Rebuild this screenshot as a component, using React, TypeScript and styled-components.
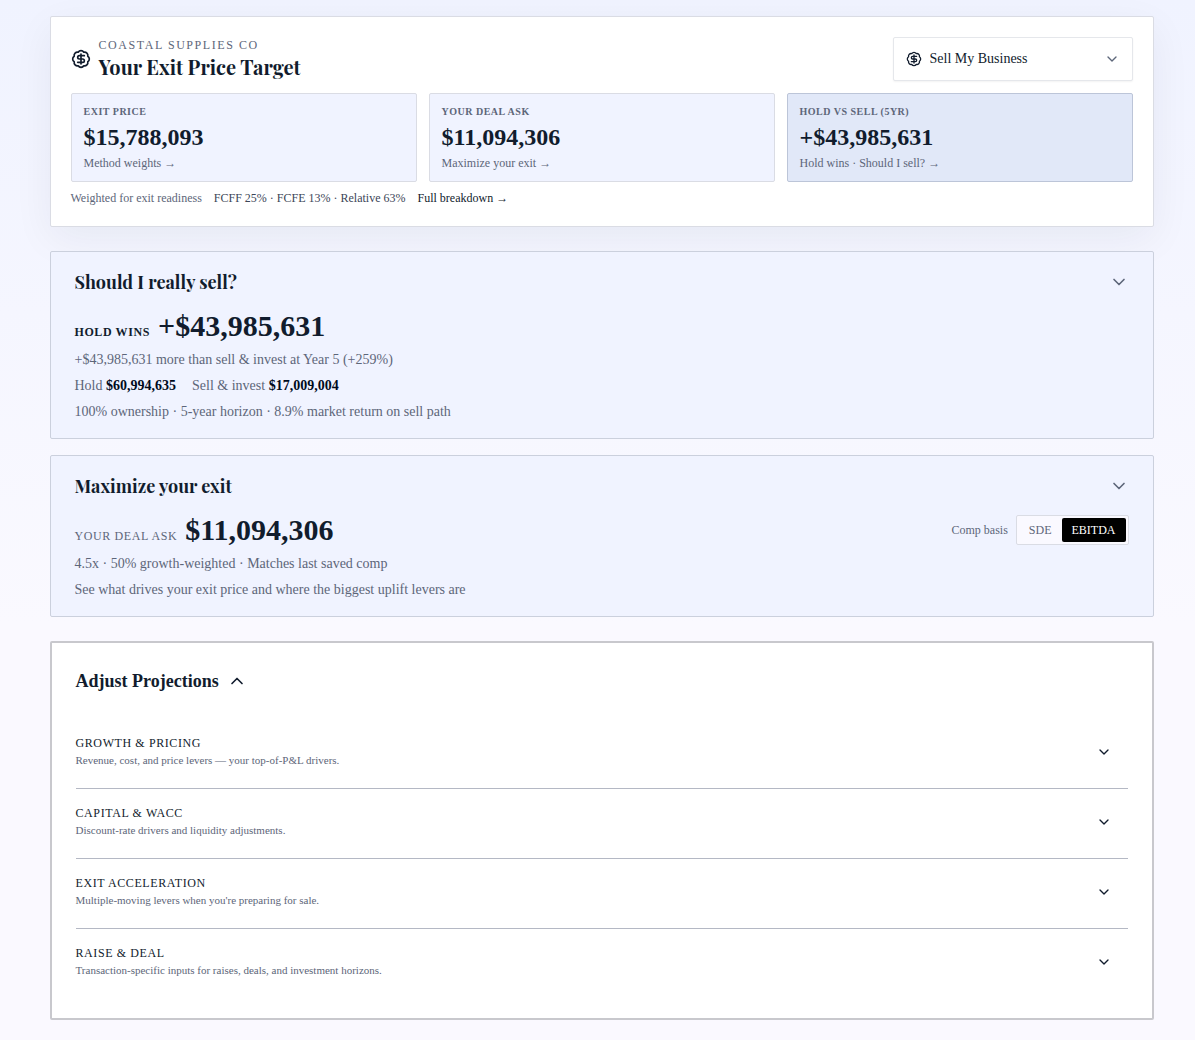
import React, { useState } from "react";
import styled, { createGlobalStyle } from "styled-components";
import { BadgeDollarSign, ChevronDown, ChevronUp } from "lucide-react";

const ink = "#111c2d";
const muted = "#5d6679";
const mist = "#f0f3ff";
const line = "#dadce4";
const body = `"Liberation Serif", "Times New Roman", serif`;
const display = `"Playfair Display", "Liberation Serif", serif`;

const GlobalStyle = createGlobalStyle`
  *, *::before, *::after { box-sizing: border-box; }
  body {
    margin: 0;
    min-height: 100vh;
    font: 400 14px/20px ${body};
    color: ${ink};
    background: linear-gradient(180deg, ${mist} 0%, #faf9ff 60%, #faf9ff 100%);
  }
  h1, h2, p, ul { margin: 0; padding: 0; }
  ul { list-style: none; }
  button, select { font: inherit; color: inherit; cursor: pointer; }
  svg { display: block; flex: none; }
`;

const Page = styled.main`
  padding: 16px 16px 20px 24px;
`;

const Column = styled.div`
  display: flex;
  flex-direction: column;
  gap: 24px;
  max-width: 1104px;
  margin: 0 auto;
`;

const Summary = styled.section`
  display: flex;
  flex-direction: column;
  padding: 20px;
  background: #fff;
  border: 1px solid ${line};
  border-radius: 2px;
  box-shadow: 0 12px 40px rgba(17, 28, 45, 0.06);
`;

const SummaryHeader = styled.header`
  display: flex;
  align-items: center;
  justify-content: space-between;
  gap: 16px;
`;

const Brand = styled.div`
  display: flex;
  align-items: center;
  gap: 8px;
`;

const Company = styled.p`
  font-size: 12px;
  line-height: 16px;
  letter-spacing: 0.13em;
  text-transform: uppercase;
  color: ${muted};
`;

const Title = styled.h1`
  font: 700 20px/28px ${display};
`;

const Picker = styled.div`
  position: relative;
  width: 240px;
`;

const PickerIcon = styled.span<{ $side: "left" | "right" }>`
  position: absolute;
  top: 14px;
  ${(p) => p.$side}: 13px;
  color: ${(p) => (p.$side === "right" ? muted : ink)};
  pointer-events: none;
`;

const PickerSelect = styled.select`
  display: block;
  width: 100%;
  height: 44px;
  padding: 0 36px;
  appearance: none;
  background: #fff;
  border: 1px solid #e5e7eb;
  border-radius: 2px;
  box-shadow: 0 1px 2px rgba(0, 0, 0, 0.05);
`;

const Metrics = styled.div`
  display: grid;
  grid-template-columns: repeat(3, minmax(0, 1fr));
  gap: 12px;
  margin-top: 12px;
`;

const Metric = styled.button<{ $strong?: boolean }>`
  display: flex;
  flex-direction: column;
  gap: 3px;
  padding: 10px 12px;
  text-align: left;
  background: ${(p) => (p.$strong ? "#e1e8f8" : mist)};
  border: 1px solid ${(p) => (p.$strong ? "#bcc5d8" : line)};
  border-radius: 2px;
`;

const MetricLabel = styled.span`
  font-size: 10px;
  font-weight: 700;
  line-height: 15px;
  letter-spacing: 0.05em;
  text-transform: uppercase;
  color: ${muted};
`;

const MetricValue = styled.span`
  font-size: 24px;
  font-weight: 700;
  line-height: 30px;
`;

const MetricNote = styled.span`
  font-size: 12px;
  line-height: 16px;
  color: ${muted};
`;

const Weights = styled.div`
  display: flex;
  flex-wrap: wrap;
  gap: 12px;
  margin-top: 8px;
  font-size: 12px;
  line-height: 16px;
  color: ${muted};
`;

const WeightSplit = styled.span`
  color: #3c4657;
`;

const BreakdownLink = styled.a`
  color: ${ink};
  text-decoration: none;
`;

const Panels = styled.div`
  display: flex;
  flex-direction: column;
  gap: 16px;
`;

const Panel = styled.section`
  padding: 16px 24px 15px;
  background: ${mist};
  border: 1px solid #cbd0dd;
  border-radius: 2px;
`;

const PanelHeading = styled.h2`
  margin-bottom: 11px;
`;

const PanelToggle = styled.button`
  display: flex;
  align-items: center;
  justify-content: space-between;
  width: 100%;
  padding: 0;
  border: 0;
  background: none;
  text-align: left;
  font: 700 18px/28px ${display};

  svg { color: ${muted}; }
`;

const PanelBody = styled.div`
  display: flex;
  flex-direction: column;
  gap: 4px;
  line-height: 22px;
  color: ${muted};
`;

const HeroRow = styled.div`
  display: flex;
  flex-wrap: wrap;
  align-items: center;
  justify-content: space-between;
  gap: 8px;
`;

const Hero = styled.p`
  display: flex;
  align-items: baseline;
  gap: 8px;
`;

const HeroLabel = styled.span<{ $bold?: boolean }>`
  font-size: 12px;
  font-weight: ${(p) => (p.$bold ? 700 : 400)};
  letter-spacing: 0.05em;
  text-transform: uppercase;
  color: ${(p) => (p.$bold ? ink : muted)};
`;

const HeroValue = styled.strong`
  font-size: 30px;
  line-height: 38px;
  color: ${ink};
`;

const Paths = styled.p`
  display: flex;
  flex-wrap: wrap;
  gap: 16px;

  strong { color: #000b1c; }
`;

const Basis = styled.div`
  display: flex;
  align-items: center;
  gap: 8px;
  font-size: 12px;
`;

const BasisGroup = styled.div`
  display: flex;
  padding: 2px;
  background: #faf9ff;
  border: 1px solid ${line};
  border-radius: 2px;
`;

const BasisButton = styled.button<{ $active: boolean }>`
  height: 24px;
  padding: 0 10px;
  border: 0;
  border-radius: 2px;
  background: ${(p) => (p.$active ? "#000" : "transparent")};
  color: ${(p) => (p.$active ? "#fff" : muted)};
`;

const Projections = styled.section`
  padding: 24px;
  background: #fff;
  border: 2px solid #c8c8cd;
  border-radius: 2px;
`;

const ProjectionsHeading = styled.h2`
  margin-bottom: 24px;
`;

const ProjectionsToggle = styled.button`
  display: flex;
  align-items: center;
  gap: 8px;
  padding: 0;
  border: 0;
  background: none;
  font: 700 18px/28px ${body};
`;

const LeverItem = styled.li`
  &:not(:last-child) {
    padding-bottom: 4px;
    border-bottom: 1px solid #b4b8c4;
  }
`;

const LeverButton = styled.button`
  display: flex;
  align-items: center;
  justify-content: space-between;
  width: 100%;
  padding: 16px 16px 16px 0;
  border: 0;
  background: none;
  text-align: left;
`;

const LeverText = styled.span`
  display: flex;
  flex-direction: column;
  gap: 1px;
`;

const LeverName = styled.span`
  font-size: 12px;
  line-height: 16px;
  letter-spacing: 0.05em;
  text-transform: uppercase;
`;

const LeverNote = styled.span`
  font-size: 11px;
  line-height: 16px;
  color: ${muted};
`;

const metrics = [
  { label: "Exit price", value: "$15,788,093", note: "Method weights →" },
  { label: "Your deal ask", value: "$11,094,306", note: "Maximize your exit →" },
  { label: "Hold vs sell (5yr)", value: "+$43,985,631", note: "Hold wins · Should I sell? →", strong: true },
];

const levers = [
  { name: "Growth & Pricing", note: "Revenue, cost, and price levers — your top-of-P&L drivers." },
  { name: "Capital & WACC", note: "Discount-rate drivers and liquidity adjustments." },
  { name: "Exit Acceleration", note: "Multiple-moving levers when you're preparing for sale." },
  { name: "Raise & Deal", note: "Transaction-specific inputs for raises, deals, and investment horizons." },
];

const bases = ["SDE", "EBITDA"];

export default function App() {
  const [basis, setBasis] = useState("EBITDA");
  const [open, setOpen] = useState(true);

  return (
    <>
      <GlobalStyle />
      <Page>
        <Column>
          <Summary>
            <SummaryHeader>
              <Brand>
                <BadgeDollarSign size={20} />
                <div>
                  <Company>Coastal Supplies Co</Company>
                  <Title>Your Exit Price Target</Title>
                </div>
              </Brand>
              <Picker>
                <PickerSelect aria-label="Goal">
                  <option>Sell My Business</option>
                </PickerSelect>
                <PickerIcon $side="left"><BadgeDollarSign size={16} /></PickerIcon>
                <PickerIcon $side="right"><ChevronDown size={16} /></PickerIcon>
              </Picker>
            </SummaryHeader>
            <Metrics>
              {metrics.map((m) => (
                <Metric key={m.label} type="button" $strong={m.strong}>
                  <MetricLabel>{m.label}</MetricLabel>
                  <MetricValue>{m.value}</MetricValue>
                  <MetricNote>{m.note}</MetricNote>
                </Metric>
              ))}
            </Metrics>
            <Weights>
              <span>Weighted for exit readiness</span>
              <WeightSplit>FCFF 25% · FCFE 13% · Relative 63%</WeightSplit>
              <BreakdownLink href="#breakdown">Full breakdown →</BreakdownLink>
            </Weights>
          </Summary>

          <Panels>
            <Panel>
              <PanelHeading>
                <PanelToggle type="button" aria-expanded={false}>
                  Should I really sell?
                  <ChevronDown size={20} />
                </PanelToggle>
              </PanelHeading>
              <PanelBody>
                <Hero>
                  <HeroLabel $bold>Hold wins</HeroLabel>
                  <HeroValue>+$43,985,631</HeroValue>
                </Hero>
                <p>+$43,985,631 more than sell &amp; invest at Year 5 (+259%)</p>
                <Paths>
                  <span>Hold <strong>$60,994,635</strong></span>
                  <span>Sell &amp; invest <strong>$17,009,004</strong></span>
                </Paths>
                <p>100% ownership · 5-year horizon · 8.9% market return on sell path</p>
              </PanelBody>
            </Panel>

            <Panel>
              <PanelHeading>
                <PanelToggle type="button" aria-expanded={false}>
                  Maximize your exit
                  <ChevronDown size={20} />
                </PanelToggle>
              </PanelHeading>
              <PanelBody>
                <HeroRow>
                  <Hero>
                    <HeroLabel>Your deal ask</HeroLabel>
                    <HeroValue>$11,094,306</HeroValue>
                  </Hero>
                  <Basis>
                    <span id="basis-label">Comp basis</span>
                    <BasisGroup role="group" aria-labelledby="basis-label">
                      {bases.map((b) => (
                        <BasisButton
                          key={b}
                          type="button"
                          $active={basis === b}
                          aria-pressed={basis === b}
                          onClick={() => setBasis(b)}
                        >
                          {b}
                        </BasisButton>
                      ))}
                    </BasisGroup>
                  </Basis>
                </HeroRow>
                <p>4.5x · 50% growth-weighted · Matches last saved comp</p>
                <p>See what drives your exit price and where the biggest uplift levers are</p>
              </PanelBody>
            </Panel>
          </Panels>

          <Projections>
            <ProjectionsHeading>
              <ProjectionsToggle type="button" aria-expanded={open} onClick={() => setOpen(!open)}>
                Adjust Projections
                {open ? <ChevronUp size={20} /> : <ChevronDown size={20} />}
              </ProjectionsToggle>
            </ProjectionsHeading>
            {open && (
              <ul>
                {levers.map((l) => (
                  <LeverItem key={l.name}>
                    <LeverButton type="button" aria-expanded={false}>
                      <LeverText>
                        <LeverName>{l.name}</LeverName>
                        <LeverNote>{l.note}</LeverNote>
                      </LeverText>
                      <ChevronDown size={16} />
                    </LeverButton>
                  </LeverItem>
                ))}
              </ul>
            )}
          </Projections>
        </Column>
      </Page>
    </>
  );
}
